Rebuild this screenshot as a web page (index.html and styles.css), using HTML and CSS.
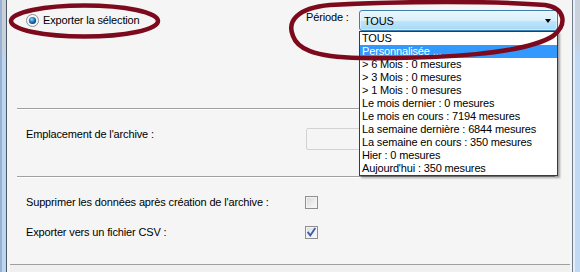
FILE: index.html
```html
<!DOCTYPE html>
<html lang="fr">
<head>
<meta charset="utf-8">
<title>Export</title>
<link rel="stylesheet" href="styles.css">
</head>
<body>
<div class="window">
  <div class="frame frame-left"></div>
  <div class="content">
    <div class="top-row">
      <label class="radio-label">
        <svg class="radio" width="13" height="13" viewBox="0 0 13 13">
          <defs>
            <radialGradient id="rbg" cx="50%" cy="50%" r="60%">
              <stop offset="0" stop-color="#e8e8e8"/>
              <stop offset="1" stop-color="#ffffff"/>
            </radialGradient>
            <radialGradient id="dot" cx="40%" cy="35%" r="65%">
              <stop offset="0" stop-color="#9de2ff"/>
              <stop offset="0.45" stop-color="#2a8ad4"/>
              <stop offset="1" stop-color="#0b3c78"/>
            </radialGradient>
          </defs>
          <circle cx="6.5" cy="6.5" r="6" fill="url(#rbg)" stroke="#8a8d90" stroke-width="1"/>
          <circle cx="6.5" cy="6.5" r="3.6" fill="url(#dot)"/>
        </svg>
        <span>Exporter la sélection</span>
      </label>
      <div class="period">
        <span class="period-label">Période :</span>
        <div class="combo">
          <div class="combo-box"><span class="combo-value">TOUS</span><span class="arrow"></span></div>
          <ul class="list">
            <li>TOUS</li>
            <li class="selected">Personnalisée ...</li>
            <li>&gt; 6 Mois : 0 mesures</li>
            <li>&gt; 3 Mois : 0 mesures</li>
            <li>&gt; 1 Mois : 0 mesures</li>
            <li>Le mois dernier : 0 mesures</li>
            <li>Le mois en cours : 7194 mesures</li>
            <li>La semaine dernière : 6844 mesures</li>
            <li>La semaine en cours : 350 mesures</li>
            <li>Hier : 0 mesures</li>
            <li>Aujourd'hui : 350 mesures</li>
          </ul>
        </div>
      </div>
    </div>
    <div class="sep"></div>
    <div class="field-row">
      <span class="label">Emplacement de l'archive :</span>
      <div class="input"></div>
    </div>
    <div class="sep sep-2"></div>
    <div class="check-row first">
      <span class="label">Supprimer les données après création de l'archive :</span>
      <span class="checkbox"></span>
    </div>
    <div class="check-row second">
      <span class="label">Exporter vers un fichier CSV :</span>
      <span class="checkbox checked">
        <svg width="11" height="11" viewBox="0 0 11 11"><path d="M2.2 5.6 L4.3 8.4 L8.8 1.8" fill="none" stroke="#3b5ba8" stroke-width="1.8" stroke-linecap="square"/></svg>
      </span>
    </div>
    <div class="footer"></div>
  </div>
  <div class="frame frame-right"></div>
  <svg class="annot" width="580" height="272" viewBox="0 0 580 272">
    <ellipse cx="84.5" cy="21" rx="73.5" ry="15.5" fill="none" stroke="#7d0a1c" stroke-width="4.5"/>
    <path d="M 293 36 C 287 22, 296 8, 330 5 C 400 1, 500 1, 545 5 C 565 8, 568 24, 553 36 C 525 54, 440 59, 360 58 C 312 57, 297 48, 293 36 Z" fill="none" stroke="#7d0a1c" stroke-width="4.5"/>
  </svg>
</div>
</body>
</html>
```
FILE: styles.css
```css
html, body {
  margin: 0;
  padding: 0;
}
body {
  font-family: "Liberation Sans", Arial, sans-serif;
  font-size: 11px;
  letter-spacing: -0.15px;
  color: #000;
  background: #f5f5f5;
}
.window {
  position: relative;
  width: 580px;
  height: 272px;
  display: flex;
  overflow: hidden;
}
.frame-left {
  width: 6px;
  border-right: 1px solid #4c5868;
  background: linear-gradient(to bottom, #c8d0d9 0, #c8d0d9 46px, #bdd5f1 62px, #bdd5f1 100%);
  box-shadow: inset 2px 0 0 #98b2d4;
}
.frame-right {
  width: 7px;
  border-left: 1px solid #6d7b8c;
  background: linear-gradient(to bottom, #c9d2dc 0, #c9d2dc 40px, #c2d9f3 56px, #c2d9f3 100%);
  box-shadow: inset 2px 0 0 #e6eef8;
}
.content {
  flex: 1;
  display: flex;
  flex-direction: column;
  background: #f5f5f5;
}
.top-row {
  box-sizing: border-box;
  height: 108px;
  padding: 10px 0 0 19px;
  display: grid;
  grid-template-columns: 279px 1fr;
  align-items: start;
}
.radio-label {
  height: 21px;
  display: flex;
  align-items: center;
  line-height: 13px;
}
.radio {
  display: block;
  margin-right: 4px;
}
.period {
  display: flex;
  align-items: flex-start;
}
.period-label {
  box-sizing: border-box;
  width: 54px;
  padding-left: 1px;
  margin-top: 1px;
  line-height: 13px;
}
.combo {
  position: relative;
  width: 199px;
}
.combo-box {
  box-sizing: border-box;
  height: 21px;
  border: 1px solid #3c7fb1;
  border-radius: 3px;
  background: linear-gradient(to bottom, #eaf6fd 0%, #d9f0fc 50%, #bee6fd 51%, #a7d9f5 100%);
  box-shadow: inset 0 0 0 1px rgba(255,255,255,0.45);
  display: flex;
  align-items: center;
  justify-content: space-between;
  padding: 1px 6px 0 4px;
}
.combo-value {
  line-height: 13px;
}
.arrow {
  width: 0;
  height: 0;
  border-left: 3.5px solid transparent;
  border-right: 3.5px solid transparent;
  border-top: 4px solid #000;
}
.list {
  position: absolute;
  left: 0;
  top: 21px;
  box-sizing: border-box;
  width: 199px;
  margin: 0;
  padding: 0;
  list-style: none;
  background: #fff;
  border: 1px solid #3a3a3a;
  box-shadow: 2px 2px 2px rgba(0,0,0,0.35);
  z-index: 2;
}
.list li {
  height: 13px;
  line-height: 13px;
  padding-left: 2px;
  white-space: nowrap;
}
.list li.selected {
  background: #3399ff;
  color: #fff;
}
.sep {
  height: 1px;
  background: #a0a0a0;
  border-bottom: 1px solid #ffffff;
  margin: 0 17px 0 10px;
}
.sep-2 {
  margin-top: 26px;
}
.field-row {
  margin-top: 18px;
  padding-left: 19px;
  display: grid;
  grid-template-columns: 279px 1fr;
  align-items: start;
}
.label {
  line-height: 13px;
  white-space: nowrap;
}
.input {
  box-sizing: border-box;
  width: 250px;
  height: 22px;
  margin-left: 1px;
  border: 1px solid #d2d2d2;
  border-radius: 2px;
  background: #f5f5f5;
}
.check-row {
  padding-left: 19px;
  display: grid;
  grid-template-columns: 279px 1fr;
  align-items: center;
  height: 13px;
}
.check-row.first {
  margin-top: 18px;
}
.check-row.second {
  margin-top: 17px;
}
.checkbox {
  box-sizing: border-box;
  width: 13px;
  height: 13px;
  border: 1px solid #8f8f8f;
  background: linear-gradient(135deg, #d6d6d6 0%, #eeeeee 60%, #fafafa 100%);
  box-shadow: inset 0 0 0 1px #f4f4f4;
  display: flex;
  align-items: center;
  justify-content: center;
}
.checkbox.checked {
  background: linear-gradient(135deg, #dcdcdc 0%, #f0f0f0 60%, #fbfbfb 100%);
}
.checkbox svg {
  display: block;
}
.footer {
  margin: 25px 2px 0 3px;
  border-top: 1px solid #a0a0a0;
  flex: 1;
  background: #f0f0f0;
}
.annot {
  position: absolute;
  left: 0;
  top: 0;
  z-index: 5;
  pointer-events: none;
}
```
